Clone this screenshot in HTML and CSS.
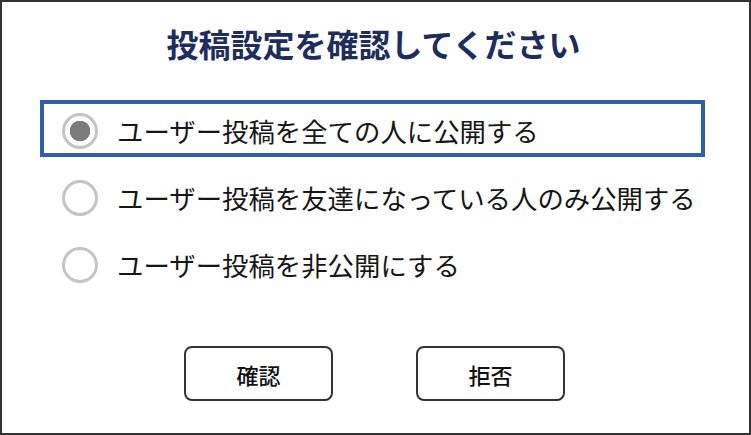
FILE: index.html
```html
<!DOCTYPE html>
<html lang="ja">
<head>
    <meta charset="UTF-8">
    <meta name="viewport" content="width=device-width, initial-scale=1.0">
    <title>投稿設定</title>
    <link rel="stylesheet" href="styles.css">
</head>
<body>
    <div class="dialog">
        <h1 class="dialog-title">投稿設定を確認してください</h1>

        <ul class="options">
            <li class="option selected">
                <span class="radio checked"></span>
                <span class="option-label">ユーザー投稿を全ての人に公開する</span>
            </li>
            <li class="option">
                <span class="radio"></span>
                <span class="option-label">ユーザー投稿を友達になっている人のみ公開する</span>
            </li>
            <li class="option">
                <span class="radio"></span>
                <span class="option-label">ユーザー投稿を非公開にする</span>
            </li>
        </ul>

        <div class="actions">
            <button class="btn">確認</button>
            <button class="btn">拒否</button>
        </div>
    </div>
</body>
</html>
```

FILE: styles.css
```css
body {
    margin: 0;
    padding: 0;
    background-color: white;
    font-family: "Noto Sans CJK JP", "Noto Sans", sans-serif;
    color: #161616;
}

.dialog {
    box-sizing: border-box;
    width: 751px;
    height: 435px;
    border: 2px solid #333333;
    padding-top: 25px;
}

.dialog-title {
    margin: 0;
    padding-right: 4px;
    font-size: 32px;
    line-height: 32px;
    font-weight: bold;
    text-align: center;
    color: #1e2d5c;
}

.options {
    list-style: none;
    margin: 41px 0 0 38px;
    padding: 0;
    width: 665px;
    display: flex;
    flex-direction: column;
    gap: 10px;
}

.option {
    box-sizing: border-box;
    height: 57px;
    padding: 5px 18px 0 18px;
    border: 4px solid transparent;
    display: flex;
    align-items: center;
    gap: 19px;
}

.option.selected {
    border-color: #2e5fa8;
}

.radio {
    box-sizing: border-box;
    flex-shrink: 0;
    width: 36px;
    height: 36px;
    border: 3px solid #c4c4c4;
    border-radius: 50%;
    background-color: white;
}

.radio.checked {
    background: radial-gradient(circle, #7b7b7b 0, #7b7b7b 10px, white 10.5px);
}

.option-label {
    font-size: 26.4px;
    line-height: 30px;
    white-space: nowrap;
}

.actions {
    display: flex;
    justify-content: center;
    gap: 83px;
    margin-top: 55px;
    padding-right: 2px;
}

.btn {
    width: 149px;
    height: 55px;
    background-color: white;
    border: 2px solid #333333;
    border-radius: 8px;
    font-family: "Noto Sans CJK JP", sans-serif;
    font-size: 22px;
    font-weight: 500;
    color: #111111;
    padding: 0;
}
```
